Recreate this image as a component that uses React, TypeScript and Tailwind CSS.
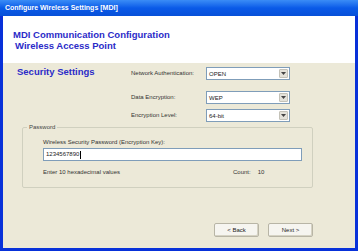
import React from "react";

type SelectProps = {
    value: string;
};
function XpSelect(props: SelectProps) {
    return <div className="flex items-center w-[84px] h-[13px] bg-white border border-[#7f9db9] pl-[2px] pr-[1px]">
        <span className="flex-1 text-[6px] text-[#222] leading-none">{props.value}</span>
        <span className="flex items-center justify-center w-[9px] h-[9px] bg-[#e4e2da] border border-[#c4c2b8] rounded-[1px]">
            <svg width="5" height="3" viewBox="0 0 5 3"><path d="M0 0h5L2.5 3z" fill="#444"/></svg>
        </span>
    </div>
}

function XpButton(props: { label: string }) {
    return <div className="flex items-center justify-center w-[45px] h-[14px] bg-[#f6f5f0] border border-[#b8b5a6] rounded-[2px] text-[6px] text-[#222] shadow-[inset_-1px_-1px_0_#d6d3c4]">
        {props.label}
    </div>
}

export default function App() {
    return <div className="w-[360px] h-[251px] bg-white" style={{fontFamily: '"Liberation Sans", Arial, sans-serif'}}>
        <div className="flex flex-col w-[358px] h-[251px] bg-[#0831d9]">
            {/* title bar */}
            <div className="h-[16px] flex items-center pl-[5px] bg-gradient-to-b from-[#3a8cf6] via-[#0a5ae8] to-[#0750d8]">
                <span className="text-white text-[7px] font-bold">Configure Wireless Settings [MDI]</span>
            </div>
            <div className="flex-1 flex flex-col mx-[3px] mb-[3px] bg-[#ece9d8]">
                {/* header */}
                <div className="h-[47px] bg-white pl-[10px] pt-[14px]">
                    <div className="text-[9.5px] font-bold text-[#2b2bc8] leading-[10px]">MDI Communication Configuration</div>
                    <div className="text-[9.5px] font-bold text-[#2b2bc8] leading-[10px] pl-[2px] mt-[1px]">Wireless Access Point</div>
                </div>

                {/* settings */}
                <div className="flex pt-[4px]">
                    <div className="w-[128px] pl-[14px] text-[9.5px] font-bold text-[#2b2bc8] leading-[10px]">Security Settings</div>
                    <div className="flex flex-col">
                        <div className="flex items-center">
                            <span className="w-[75px] text-[6px] text-[#333]">Network Authentication:</span>
                            <XpSelect value="OPEN"/>
                        </div>
                        <div className="flex items-center mt-[11px]">
                            <span className="w-[75px] text-[6px] text-[#333]">Data Encryption:</span>
                            <XpSelect value="WEP"/>
                        </div>
                        <div className="flex items-center mt-[5px]">
                            <span className="w-[75px] text-[6px] text-[#333]">Encryption Level:</span>
                            <XpSelect value="64-bit"/>
                        </div>
                    </div>
                </div>

                {/* password group */}
                <fieldset className="ml-[19px] w-[291px] h-[65px] mt-[1px] border border-[#d0d0bf] rounded-[2px] pl-[20px] pr-[10px]">
                    <legend className="ml-[-16px] px-[2px] text-[6px] text-[#444]">Password</legend>
                    <div className="text-[6px] text-[#333] mt-[6px]">Wireless Security Password (Encryption Key):</div>
                    <div className="mt-[1px] h-[13px] w-[259px] bg-white border border-[#7f9db9] flex items-center pl-[2px] text-[6px] text-[#222]">
                        1234567890<span className="w-px h-[8px] bg-black ml-px"/>
                    </div>
                    <div className="flex mt-[7px] text-[6px] text-[#333]">
                        <span className="w-[190px]">Enter 10 hexadecimal values</span>
                        <span>Count:</span>
                        <span className="ml-[7px]">10</span>
                    </div>
                </fieldset>

                {/* buttons */}
                <div className="flex justify-end gap-[9px] mt-[35px] pr-[42px]">
                    <XpButton label="< Back"/>
                    <XpButton label="Next >"/>
                </div>
            </div>
        </div>
    </div>
}
